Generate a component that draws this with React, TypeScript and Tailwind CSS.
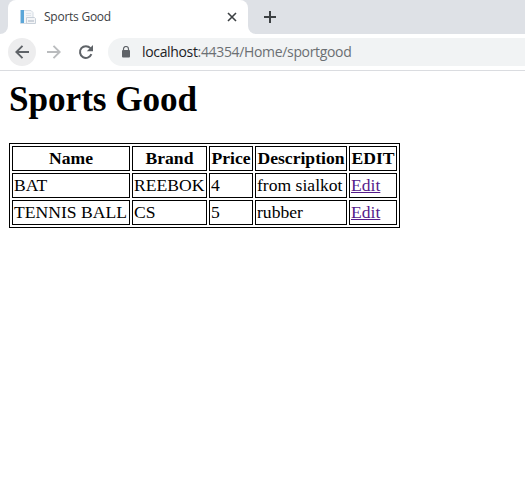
import React from "react";

const goods = [
  { name: "BAT", brand: "REEBOK", price: 4, description: "from sialkot" },
  { name: "TENNIS BALL", brand: "CS", price: 5, description: "rubber" },
];

const cell = "h-[25px] border border-black px-px py-0 leading-[21px] whitespace-nowrap";

function PageIcon() {
  return (
    <svg width="16" height="16" viewBox="0 0 16 16">
      <path d="M.5 1.5H11l2 2v11H.5z" fill="#f4f6f8" stroke="#d5dce4" />
      <path d="M1 1h3v13H1z" fill="#5ba6d8" />
      <path d="M0 1h1v13H0z" fill="#b5d5ec" />
      <path d="M6 4h5v1H6zM6 6h5v1H6z" fill="#dfe4ea" />
      <path d="M6.5 8.5h8l1 1v5h-9z" fill="#f4f5f7" stroke="#c8d0d9" />
      <path d="M8 11h6v2H8z" fill="#cdd3db" />
    </svg>
  );
}

function TabStrip() {
  return (
    <div className="flex h-[34px] bg-white">
      <div className="w-2 rounded-br-[8px] bg-[#dee1e6]" />
      <div className="w-60 bg-[#dee1e6]">
        <div className="flex h-full items-center rounded-t-[8px] bg-white pl-3 pr-[11px] font-['Open_Sans',sans-serif]">
          <PageIcon />
          <span className="ml-2 flex-1 text-[12px] leading-4 tracking-[-0.25px] text-[#3c4043]">Sports Good</span>
          <svg width="10" height="10" viewBox="0 0 10 10" stroke="#3c4043" strokeWidth="1.6">
            <path d="M1 1l8 8M9 1L1 9" />
          </svg>
        </div>
      </div>
      <div className="flex flex-1 items-center rounded-bl-[8px] bg-[#dee1e6] pl-4">
        <svg width="12" height="12" viewBox="0 0 12 12" fill="#3c4043">
          <path d="M5 0h2v5h5v2H7v5H5V7H0V5h5z" />
        </svg>
      </div>
    </div>
  );
}

function Toolbar() {
  return (
    <div className="flex h-[37px] items-center border-b border-[#dadce0] bg-white pl-2">
      <div className="flex size-7 items-center justify-center rounded-full bg-[#ededee]">
        <svg width="14" height="14" viewBox="0 0 14 14" fill="none" stroke="#5f6368" strokeWidth="1.9">
          <path d="M14 7H2M7.5 .8L1.3 7l6.2 6.2" />
        </svg>
      </div>
      <svg className="ml-[11px]" width="14" height="14" viewBox="0 0 14 14" fill="none" stroke="#babcbe" strokeWidth="1.9">
        <path d="M0 7h12M6.5 .8L12.7 7l-6.2 6.2" />
      </svg>
      <svg className="ml-[15px]" width="20" height="20" viewBox="0 0 20 20">
        <path d="M15.4 12.2A5.9 5.9 0 1 1 14.4 6.2" fill="none" stroke="#5f6368" strokeWidth="2" />
        <path d="M17 3v6.2h-6.2z" fill="#5f6368" />
      </svg>
      <div className="ml-3 flex h-7 flex-1 items-center rounded-l-full bg-[#f1f3f4] pl-[13px]">
        <svg width="10" height="12" viewBox="0 0 10 12">
          <path d="M2.5 5V3a2.5 2.5 0 0 1 5 0v2" fill="none" stroke="#5f6368" strokeWidth="1.2" />
          <rect x="1" y="4" width="8" height="7.5" rx="1" fill="#5f6368" />
        </svg>
        <span className="ml-[11px] font-['Open_Sans',sans-serif] text-[14px] leading-5 tracking-[-0.34px] text-[#6b6f73]">
          <span className="text-[#202124]">localhost</span>:44354/Home/sportgood
        </span>
      </div>
    </div>
  );
}

export default function App() {
  return (
    <div className="min-h-screen overflow-hidden bg-white">
      <TabStrip />
      <Toolbar />
      <main className="pl-[9px] pt-[9px] font-['Liberation_Serif',serif] text-[17.6px] text-black">
        <h1 className="text-[35.2px] font-bold leading-[40px] tracking-[-0.05px]">Sports Good</h1>
        <table className="mt-[23px] w-[391px] table-fixed border-separate border-spacing-[2px] border border-black">
          <colgroup>
            <col className="w-[118px]" />
            <col className="w-[75px]" />
            <col className="w-[44px]" />
            <col className="w-[92px]" />
            <col className="w-[48px]" />
          </colgroup>
          <thead>
            <tr>
              {["Name", "Brand", "Price", "Description", "EDIT"].map((title) => (
                <th key={title} className={cell}>{title}</th>
              ))}
            </tr>
          </thead>
          <tbody>
            {goods.map((good) => (
              <tr key={good.name}>
                <td className={cell}>{good.name}</td>
                <td className={cell}>{good.brand}</td>
                <td className={cell}>{good.price}</td>
                <td className={cell}>{good.description}</td>
                <td className={cell}>
                  <a href="#" className="text-[#551a8b] underline">Edit</a>
                </td>
              </tr>
            ))}
          </tbody>
        </table>
      </main>
    </div>
  );
}
